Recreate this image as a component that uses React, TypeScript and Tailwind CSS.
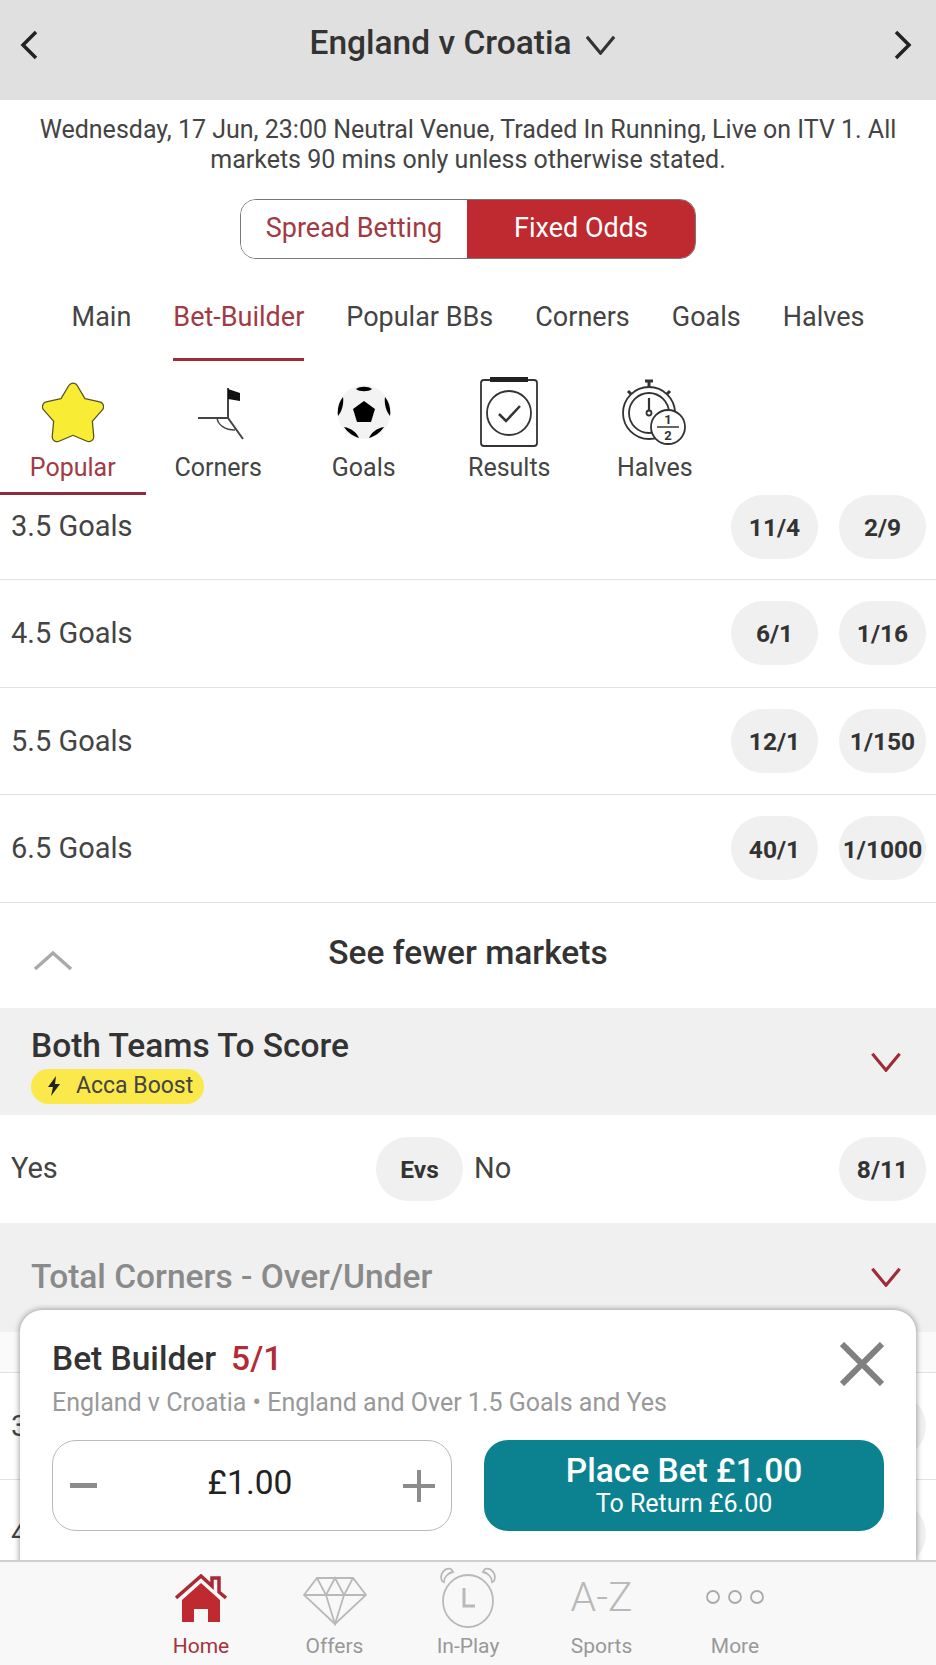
import { ReactNode } from "react";

const tabs = ["Main", "Bet-Builder", "Popular BBs", "Corners", "Goals", "Halves"];

const goalRows = [
  { label: "4.5 Goals", over: "6/1", under: "1/16" },
  { label: "5.5 Goals", over: "12/1", under: "1/150" },
  { label: "6.5 Goals", over: "40/1", under: "1/1000" },
];

function Chevron({ dir, className }: { dir: "left" | "right" | "down" | "up"; className: string }) {
  const points = {
    left: "16,2 3,15 16,28",
    right: "3,2 16,15 3,28",
    down: "1,2 16,20 31,2",
    up: "2,19 20,3 38,19",
  }[dir];
  const box = {
    left: "0 0 19 30",
    right: "0 0 19 30",
    down: "0 0 32 22",
    up: "0 0 40 22",
  }[dir];
  return (
    <svg viewBox={box} className={className} fill="none" stroke="currentColor" strokeWidth="3.500">
      <polyline points={points} />
    </svg>
  );
}

function Pill({ children }: { children: ReactNode }) {
  return (
    <div className="flex h-[64px] w-[87px] shrink-0 items-center justify-center rounded-full bg-[#f0f0f0] pt-[3px] text-[24.500px] font-bold text-[#333]">
      {children}
    </div>
  );
}

function GoalRow({ label, over, under }: { label: string; over: string; under: string }) {
  return (
    <div className="flex h-[107.6px] items-center border-b border-[#e2e2e2] pl-[11px] pr-[10px]">
      <span className="flex-1 pt-[1px] text-[29px] text-[#444]">{label}</span>
      <div className="flex gap-[21px]">
        <Pill>{over}</Pill>
        <Pill>{under}</Pill>
      </div>
    </div>
  );
}

function StarIcon() {
  const star = "31,7 39.8,21.9 56.7,25.7 45.3,38.600 46.9,55.8 31,49 15.1,55.8 16.7,38.600 5.3,25.7 22.2,21.9";
  return (
    <svg viewBox="0 0 62 62" className="h-[62px] w-[62px]" strokeLinejoin="round">
      <polygon points={star} fill="#55531f" stroke="#55531f" strokeWidth="11" />
      <polygon points={star} fill="#f9ec35" stroke="#f9ec35" strokeWidth="8.500" />
    </svg>
  );
}

function CornerIcon() {
  return (
    <svg viewBox="0 0 62 62" className="h-[62px] w-[62px]" fill="none" stroke="#444" strokeWidth="2">
      <g transform="translate(5 5)">
        <path d="M36 2V32M6 32H36L51 53" />
        <path d="M25 32C26 39 33 44 43 44" strokeWidth="1.500" />
        <path d="M36 3L48 7V15L36 13Z" fill="#111" stroke="none" />
      </g>
    </svg>
  );
}

function BallIcon() {
  return (
    <svg viewBox="0 0 62 62" className="h-[62px] w-[62px]">
      <circle cx="31" cy="31" r="27" fill="#f3f3f3" />
      <path d="M31 20L42 28L38 41H24L20 28Z" fill="#000" />
      <path d="M23 8C27 5 35 5 39 8C36 11 26 11 23 8Z" fill="#000" />
      <path d="M10 16C6 21 4 28 5 35C9 30 11 23 10 16Z" fill="#000" />
      <path d="M52 16C56 21 58 28 57 35C53 30 51 23 52 16Z" fill="#000" />
      <path d="M11 46C15 52 20 55 26 57C24 52 18 47 11 46Z" fill="#000" />
      <path d="M51 46C47 52 42 55 36 57C38 52 44 47 51 46Z" fill="#000" />
    </svg>
  );
}

function ClipboardIcon() {
  return (
    <svg viewBox="0 0 62 72" className="h-[72px] w-[62px]" fill="none" stroke="#333" strokeWidth="1.800">
      <rect x="3" y="4" width="56" height="66" rx="3" />
      <path d="M12 3.500H50" strokeWidth="5" stroke="#222" />
      <circle cx="31" cy="37" r="22" />
      <path d="M21 38L28 45L42 30" strokeWidth="2.500" />
    </svg>
  );
}

function HalvesIcon() {
  return (
    <svg viewBox="0 0 72 72" className="h-[72px] w-[72px]" fill="none" stroke="#333" strokeWidth="1.800">
      <circle cx="30" cy="37" r="26" />
      <circle cx="30" cy="37" r="20" />
      <path d="M26 5H34M30 5V11M9 15L12 18M51 15L48 18" strokeWidth="3" />
      <path d="M30 22V34" strokeWidth="2.200" />
      <circle cx="30" cy="37" r="2.500" />
      <circle cx="49" cy="51" r="17" fill="#fff" />
      <path d="M38 51H60" strokeWidth="1.500" />
      <text x="49" y="48" textAnchor="middle" fontSize="13" fontWeight="700" fill="#333" stroke="none">
        1
      </text>
      <text x="49" y="64" textAnchor="middle" fontSize="13" fontWeight="700" fill="#333" stroke="none">
        2
      </text>
    </svg>
  );
}

const iconTabs = [
  { label: "Popular", icon: <StarIcon /> },
  { label: "Corners", icon: <CornerIcon /> },
  { label: "Goals", icon: <BallIcon /> },
  { label: "Results", icon: <ClipboardIcon /> },
  { label: "Halves", icon: <HalvesIcon /> },
];

function HomeIcon() {
  return (
    <svg viewBox="0 0 52 50" className="mt-[3px] h-[50px] w-[52px]">
      <path d="M7 26L26 9L45 26V48H33V35H19V48H7Z" fill="#be2a30" />
      <path d="M1 24L26 2L37 12V4H44V18L51 24" fill="none" stroke="#a92a34" strokeWidth="3.500" />
    </svg>
  );
}

function DiamondIcon() {
  return (
    <svg viewBox="0 0 66 50" className="mt-[8px] h-[50px] w-[66px]" fill="none" stroke="#b9b9b9" strokeWidth="1.800">
      <path d="M15 2H51L64 19L33 48L2 19Z" />
      <path d="M2 19H64M15 2L24 19L33 48L42 19L51 2M24 19L33 2L42 19" />
    </svg>
  );
}

function ClockIcon() {
  return (
    <svg viewBox="0 0 58 62" className="h-[62px] w-[58px]" fill="none" stroke="#b9b9b9" strokeWidth="1.800">
      <ellipse cx="29" cy="35" rx="25" ry="26" />
      <path d="M25 22V40H36" strokeWidth="3" />
      <path d="M3 15C0 8 6 1 12 3L14 6C9 7 5 11 5 16Z" />
      <path d="M55 15C58 8 52 1 46 3L44 6C49 7 53 11 53 16Z" />
    </svg>
  );
}

const navItems = [
  { label: "Home", icon: <HomeIcon />, active: true },
  { label: "Offers", icon: <DiamondIcon /> },
  { label: "In-Play", icon: <ClockIcon /> },
  {
    label: "Sports",
    icon: <span className="text-[41px] font-light leading-none text-[#b9b9b9]">A-Z</span>,
  },
  {
    label: "More",
    icon: (
      <svg viewBox="0 0 60 16" className="h-[16px] w-[60px]" fill="none" stroke="#aaa" strokeWidth="1.800">
        <circle cx="8" cy="8" r="6" />
        <circle cx="30" cy="8" r="6" />
        <circle cx="52" cy="8" r="6" />
      </svg>
    ),
  },
];

export default function App() {
  return (
    <main className="relative h-[1665px] w-[936px] overflow-hidden bg-white font-[Roboto,sans-serif] text-[#333]">
      {/* Match header */}
      <header className="flex h-[100px] items-start justify-between bg-[#e0e0e0] pl-[20px] pr-[24px] pt-[29px]">
        <Chevron dir="left" className="mt-[1px] h-[30px] w-[19px] text-[#222]" />
        <div className="mr-[8px] flex items-center gap-[14px]">
          <h1 className="text-[33.500px] font-medium leading-[28px] text-[#333]">England v Croatia</h1>
          <Chevron dir="down" className="mt-[4px] h-[20px] w-[29px] text-[#333]" />
        </div>
        <Chevron dir="right" className="mt-[1px] h-[30px] w-[19px] text-[#222]" />
      </header>

      <p className="px-[30px] pt-[15px] text-center text-[25px] leading-[30px] text-[#444]">
        Wednesday, 17 Jun, 23:00 Neutral Venue, Traded In Running, Live on ITV 1. All
        <br />
        markets 90 mins only unless otherwise stated.
      </p>

      {/* Spread / Fixed toggle */}
      <div className="mt-[24px] flex justify-center">
        <div className="flex h-[60px] w-[456px] overflow-hidden rounded-[16px] border border-[#777] text-[27px]">
          <div className="flex flex-1 items-center justify-center bg-white pb-[2px] text-[#a23a44]">Spread Betting</div>
          <div className="flex w-[228px] items-center justify-center bg-[#be2a30] pb-[2px] text-white">Fixed Odds</div>
        </div>
      </div>

      {/* Market tabs */}
      <nav className="mt-[28px] flex justify-center gap-[42px] text-[27px] text-[#444]">
        {tabs.map((tab) => (
          <div
            key={tab}
            className={
              tab === "Bet-Builder"
                ? "h-[74px] border-b-[3px] border-[#9c2c38] pt-[10px] leading-[40px] text-[#a23a44]"
                : "h-[74px] pt-[10px] leading-[40px]"
            }
          >
            {tab}
          </div>
        ))}
      </nav>

      {/* Bet-builder categories */}
      <div className="flex h-[134px]">
        {iconTabs.map((tab) => (
          <div
            key={tab.label}
            className={
              tab.label === "Popular"
                ? "flex h-[134px] w-[145.500px] flex-col items-center border-b-[3px] border-[#8f2c3a] text-[#a23a44]"
                : "flex h-[134px] w-[145.500px] flex-col items-center text-[#444]"
            }
          >
            <div className="flex h-[92px] items-center pt-[10px]">{tab.icon}</div>
            <span className="text-[25px] leading-[30px]">{tab.label}</span>
          </div>
        ))}
      </div>

      {/* Goals market, scrolled */}
      <div className="flex h-[85px] items-start border-b border-[#e2e2e2] pl-[11px] pr-[10px]">
        <span className="flex-1 text-[29px] leading-[62px] text-[#444]">3.5 Goals</span>
        <div className="flex gap-[21px]">
          <Pill>11/4</Pill>
          <Pill>2/9</Pill>
        </div>
      </div>
      {goalRows.map((row) => (
        <GoalRow key={row.label} {...row} />
      ))}

      <div className="relative flex h-[105px] items-center justify-center pb-[4px]">
        <Chevron dir="up" className="absolute left-[33px] top-[47px] h-[22px] w-[40px] text-[#aaa]" />
        <span className="text-[33.500px] font-medium text-[#333]">See fewer markets</span>
      </div>

      {/* Both teams to score */}
      <section className="flex h-[107px] items-start justify-between bg-[#f0f0f0] pl-[31px] pr-[34px] pt-[19px]">
        <div>
          <h2 className="text-[33.500px] font-medium leading-[38px] text-[#333]">Both Teams To Score</h2>
          <div className="mt-[4px] flex h-[35px] w-[173px] items-center gap-[15px] rounded-full bg-[#fbe84a] pl-[16px] text-[23px] text-[#444]">
            <svg viewBox="0 0 14 20" className="h-[20px] w-[14px]" fill="#222">
              <path d="M9 0L1 11H6L4 20L13 8H8Z" />
            </svg>
            Acca Boost
          </div>
        </div>
        <Chevron dir="down" className="mt-[25px] h-[20px] w-[32px] text-[#a02a38]" />
      </section>
      <div className="flex h-[108px] items-center">
        <div className="flex w-[463px] items-center pl-[11px]">
          <span className="flex-1 text-[29px] text-[#444]">Yes</span>
          <Pill>Evs</Pill>
        </div>
        <div className="flex flex-1 items-center pl-[11px] pr-[10px]">
          <span className="flex-1 text-[29px] text-[#444]">No</span>
          <Pill>8/11</Pill>
        </div>
      </div>

      {/* Total corners, sits behind the bet slip */}
      <section className="flex h-[109px] items-start justify-between bg-[#f0f0f0] pl-[31px] pr-[34px] pt-[35px]">
        <h2 className="text-[33.500px] font-medium leading-[38px] text-[#8a8a8a]">Total Corners - Over/Under</h2>
        <Chevron dir="down" className="mt-[9px] h-[20px] w-[32px] text-[#a02a38]" />
      </section>
      <div className="h-[41px] border-b border-[#e2e2e2] bg-[#fafafa]" />
      <GoalRow label="3.5 Goals" over="11/4" under="2/9" />
      <GoalRow label="4.5 Goals" over="6/1" under="1/16" />

      {/* Bet slip */}
      <div className="absolute left-[20px] top-[1310px] h-[260px] w-[896px] rounded-t-[22px] bg-white px-[32px] pt-[28px] shadow-[0_0_6px_rgba(0,0,0,0.45)]">
        <div className="flex items-center gap-[15px] text-[33.500px] font-medium leading-[42px]">
          <span className="text-[#333]">Bet Builder</span>
          <span className="text-[#b02c36]">5/1</span>
        </div>
        <svg
          viewBox="0 0 44 44"
          className="absolute left-[820px] top-[32px] h-[44px] w-[44px]"
          fill="none"
          stroke="#808080"
          strokeWidth="6"
        >
          <path d="M2 2L42 42M42 2L2 42" />
        </svg>
        <p className="mt-[8px] text-[25px] leading-[30px] text-[#999]">
          England v Croatia • England and Over 1.5 Goals and Yes
        </p>
        <div className="mt-[22px] flex gap-[32px]">
          <div className="flex h-[91px] w-[400px] items-center justify-between rounded-[24px] border border-[#bbb] pl-[17px] pr-[16px]">
            <div className="h-[5px] w-[27px] bg-[#8c8c8c]" />
            <span className="pb-[4px] text-[33.500px] text-[#222]">£1.00</span>
            <div className="relative h-[32px] w-[32px]">
              <div className="absolute left-0 top-[14px] h-[4px] w-[32px] bg-[#8c8c8c]" />
              <div className="absolute left-[14px] top-0 h-[32px] w-[4px] bg-[#8c8c8c]" />
            </div>
          </div>
          <div className="flex h-[91px] w-[400px] flex-col items-center justify-center rounded-[24px] bg-[#0c8290] text-white">
            <span className="text-[33.500px] font-medium leading-[37px]">Place Bet £1.00</span>
            <span className="text-[25px] leading-[30px]">To Return £6.00</span>
          </div>
        </div>
      </div>

      {/* Bottom navigation */}
      <nav className="absolute bottom-0 left-0 flex h-[105px] w-[936px] justify-center border-t-2 border-[#cfcfcf] bg-[#f8f8f8]">
        {navItems.map((item) => (
          <div key={item.label} className="flex w-[133.500px] flex-col items-center">
            <div className="flex h-[70px] items-center">{item.icon}</div>
            <span
              className={
                item.active
                  ? "text-[21px] leading-[28px] text-[#a5323c]"
                  : "text-[21px] leading-[28px] text-[#999]"
              }
            >
              {item.label}
            </span>
          </div>
        ))}
      </nav>
    </main>
  );
}
